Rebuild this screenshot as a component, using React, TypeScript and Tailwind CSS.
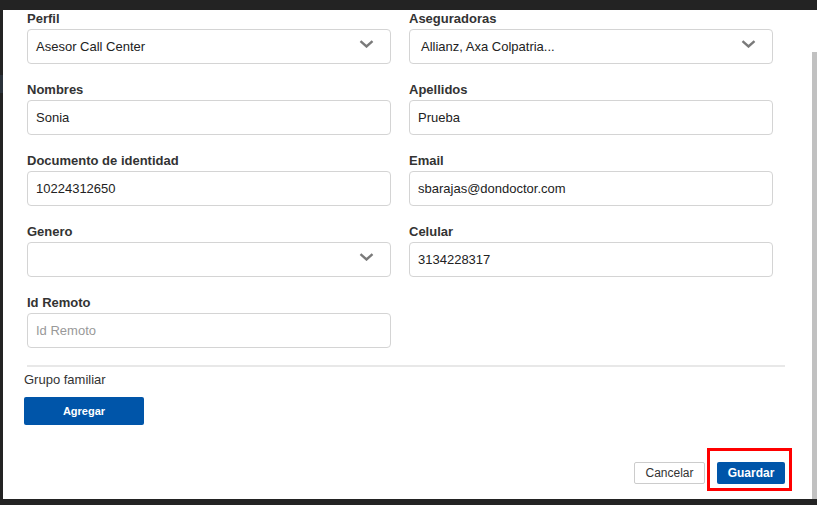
import React from 'react';

interface Field {
  label: string;
  value?: string;
  placeholder?: string;
  select?: boolean;
  textPad?: string;
}

const fields: (Field | null)[] = [
  { label: 'Perfil', value: 'Asesor Call Center', select: true },
  { label: 'Aseguradoras', value: 'Allianz, Axa Colpatria...', select: true, textPad: 'pl-[11px]' },
  { label: 'Nombres', value: 'Sonia' },
  { label: 'Apellidos', value: 'Prueba' },
  { label: 'Documento de identidad', value: '10224312650' },
  { label: 'Email', value: 'sbarajas@dondoctor.com' },
  { label: 'Genero', value: '', select: true },
  { label: 'Celular', value: '3134228317' },
  { label: 'Id Remoto', placeholder: 'Id Remoto' },
  null,
];

function Chevron() {
  return (
    <svg width="15" height="8" viewBox="0 0 15 8" className="mt-[-5px]">
      <path d="M1.5 1.2 L7.5 6.5 L13.5 1.2" fill="none" stroke="#7a7a7a" strokeWidth="2.4" />
    </svg>
  );
}

function FormField({ field }: { field: Field }) {
  return (
    <div className="mb-[17px]">
      <div className="text-[13px] leading-[18px] font-bold text-[#333333] mb-[1px]">{field.label}</div>
      <div className="h-[35px] border border-[#d4d4d4] rounded-[4px] bg-white flex items-center justify-between pr-[16px]">
        {field.placeholder ? (
          <span className={`${field.textPad ?? 'pl-[8px]'} text-[13px] text-[#999999]`}>{field.placeholder}</span>
        ) : (
          <span className={`${field.textPad ?? 'pl-[8px]'} text-[13px] text-[#222222]`}>{field.value}</span>
        )}
        {field.select && <Chevron />}
      </div>
    </div>
  );
}

export default function App() {
  return (
    <div
      className="w-[817px] h-[505px] bg-[#232323] flex flex-col overflow-hidden relative"
      style={{ fontFamily: '"Liberation Sans", Arial, sans-serif' }}
    >
      {/* backdrop peek on the left */}
      <div className="absolute left-0 top-[75px] w-[3px] h-[18px] bg-[#2b323a]" />

      <div className="h-[10px] shrink-0" />
      <div className="flex ml-[3px] h-[489px] bg-white">
        <div className="flex-1 pl-[21px] pr-[27px] flex flex-col relative">
          <div className="grid grid-cols-[364px_364px] gap-x-[18px] ml-[3px]">
            {fields.map((f, i) => (f ? <FormField key={i} field={f} /> : <div key={i} />))}
          </div>

          <div className="h-[2px] bg-[#e8e8e8] ml-[3px] w-[758px]" />

          <div className="text-[13px] text-[#333333] mt-[5px] leading-[16px]">Grupo familiar</div>
          <button className="mt-[9px] w-[120px] h-[28px] bg-[#0055a9] rounded-[2px] text-white text-[11px] font-bold">
            Agregar
          </button>

          <div className="flex justify-end gap-[12px] mt-[37px]">
            <button className="w-[71px] h-[22px] border border-[#cccccc] rounded-[2px] bg-white text-[12px] text-[#333333]">
              Cancelar
            </button>
            <button className="w-[68px] h-[22px] bg-[#0055a9] rounded-[2px] text-white text-[12px] font-bold">
              Guardar
            </button>
          </div>

          {/* highlight annotation */}
          <div className="absolute left-[704px] top-[438px] w-[85px] h-[43px] border-[3px] border-[#ff0000] pointer-events-none" />
        </div>

        {/* scrollbar */}
        <div className="w-[8px] flex flex-col">
          <div className="h-[42px]" />
          <div className="flex-1 bg-[#c1c1c1]" />
        </div>
      </div>
    </div>
  );
}
